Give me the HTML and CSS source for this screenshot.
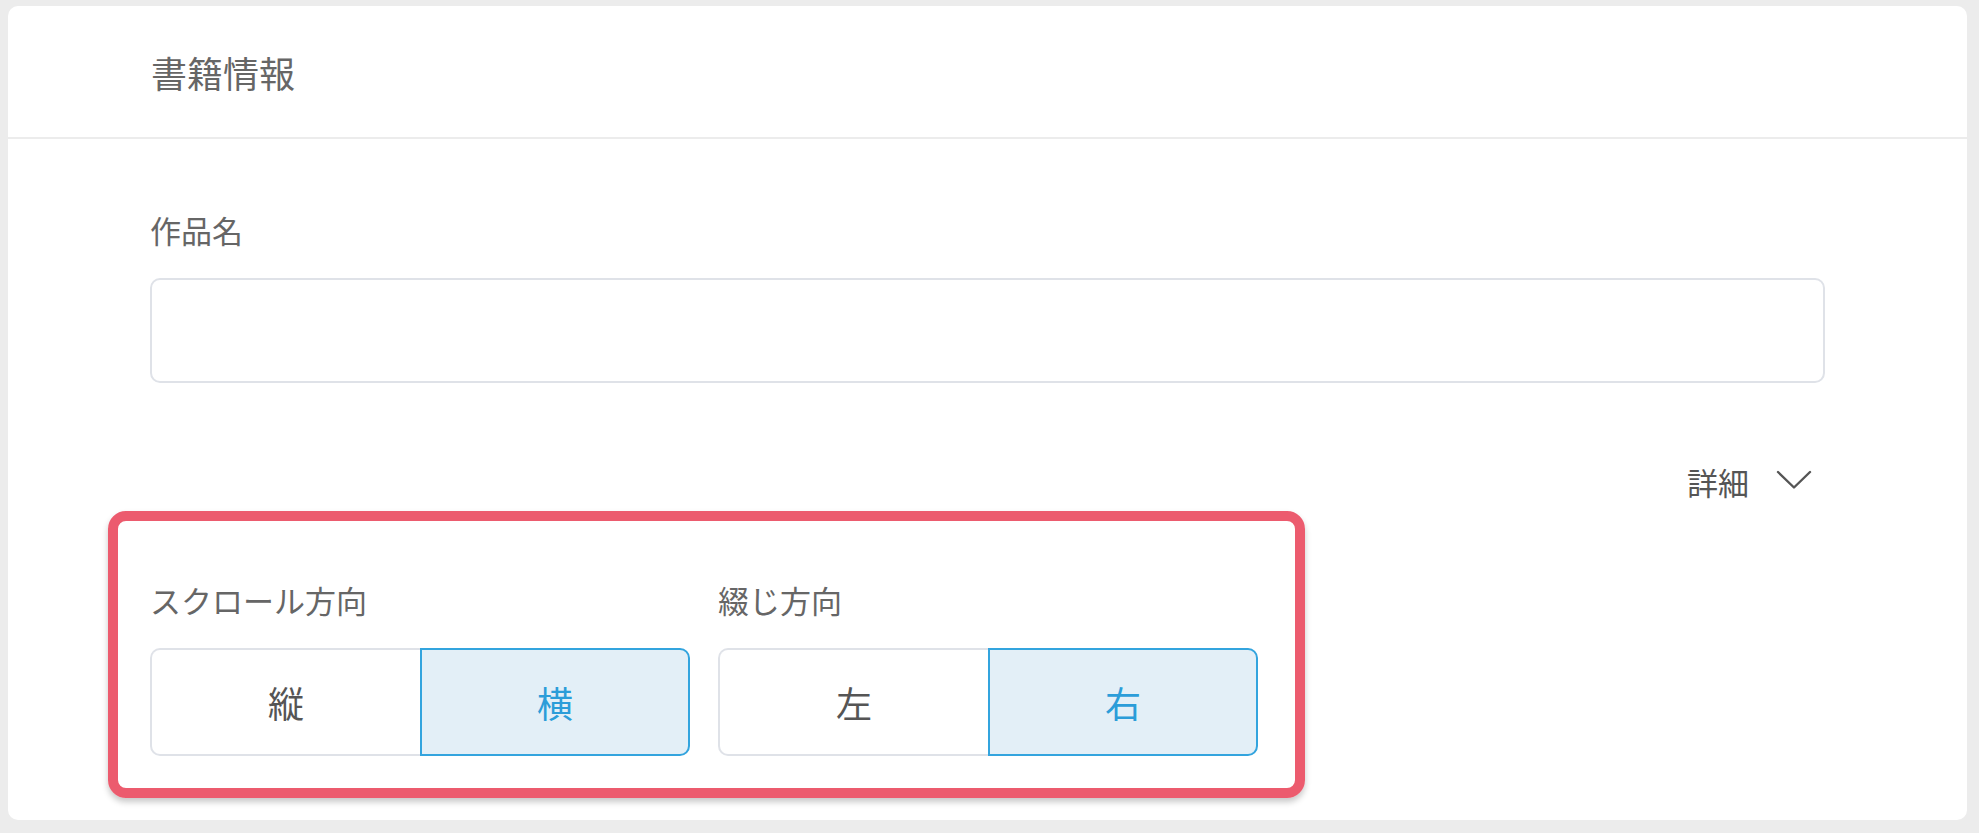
FILE: index.html
```html
<!DOCTYPE html>
<html lang="ja">
<head>
<meta charset="utf-8">
<title>書籍情報</title>
<link rel="stylesheet" href="styles.css">
</head>
<body>
<div class="card">
  <div class="card-header">
    <h1 class="card-title">書籍情報</h1>
  </div>
  <div class="card-body">
    <label class="field-label">作品名</label>
    <div class="text-input"></div>
    <div class="details-row">
      <span class="details-text">詳細</span>
      <svg class="chevron" width="36" height="20" viewBox="0 0 36 20">
        <polyline points="2,2 18,17.5 34,2" fill="none" stroke="#555" stroke-width="2.4" stroke-linecap="round" stroke-linejoin="round"/>
      </svg>
    </div>
    <div class="options">
      <div class="option-group">
        <div class="field-label">スクロール方向</div>
        <div class="segment">
          <div class="seg-btn">縦</div>
          <div class="seg-btn active">横</div>
        </div>
      </div>
      <div class="option-group">
        <div class="field-label">綴じ方向</div>
        <div class="segment">
          <div class="seg-btn">左</div>
          <div class="seg-btn active">右</div>
        </div>
      </div>
      <div class="highlight"></div>
    </div>
  </div>
</div>
</body>
</html>
```

FILE: styles.css
```css
html, body {
  margin: 0;
  padding: 0;
}
body {
  background: #ececec;
  padding: 6px 12px 13px 8px;
  font-family: "Noto Sans CJK JP", "Noto Sans", sans-serif;
  color: #666;
}
.card {
  background: #fff;
  border-radius: 10px;
  height: 814px;
  box-sizing: border-box;
  overflow: visible;
}
.card-header {
  height: 131px;
  display: flex;
  align-items: center;
  padding-left: 143px;
  border-bottom: 2px solid #ececec;
}
.card-title {
  margin: 0;
  font-size: 36px;
  line-height: 36px;
  font-weight: 400;
  color: #666;
}
.card-body {
  padding: 75px 142px 64px 142px;
}
.field-label {
  display: block;
  font-size: 31px;
  line-height: 31px;
  color: #666;
}
.text-input {
  margin-top: 33px;
  height: 105px;
  box-sizing: border-box;
  border: 2px solid #dfe2e8;
  border-radius: 10px;
  background: #fff;
}
.details-row {
  margin-top: 83px;
  height: 31px;
  display: flex;
  justify-content: flex-end;
  align-items: center;
  gap: 27px;
  padding-right: 13px;
}
.details-text {
  font-size: 31px;
  line-height: 31px;
  color: #555;
}
.chevron {
  display: block;
  margin-top: -3px;
}
.options {
  margin-top: 87px;
  position: relative;
  display: flex;
  gap: 28px;
  width: max-content;
}
.option-group {
  width: 540px;
}
.segment {
  margin-top: 33px;
  display: grid;
  grid-template-columns: 1fr 1fr;
  height: 108px;
}
.seg-btn {
  display: flex;
  align-items: center;
  justify-content: center;
  font-size: 36px;
  line-height: 36px;
  color: #555;
  border: 2px solid #dfe2e8;
  background: #fff;
  box-sizing: border-box;
}
.seg-btn:first-child {
  border-right: none;
  border-radius: 10px 0 0 10px;
}
.seg-btn:last-child {
  border-radius: 0 10px 10px 0;
}
.seg-btn.active {
  background: #e3eff7;
  border-color: #33a4de;
  color: #2b9dd9;
}
.highlight {
  position: absolute;
  left: -42px;
  right: -47px;
  top: -73px;
  bottom: -42px;
  border: 10px solid #ec5b6e;
  border-radius: 18px;
  box-shadow: 0 4px 6px rgba(0, 0, 0, 0.22);
  pointer-events: none;
}
```
